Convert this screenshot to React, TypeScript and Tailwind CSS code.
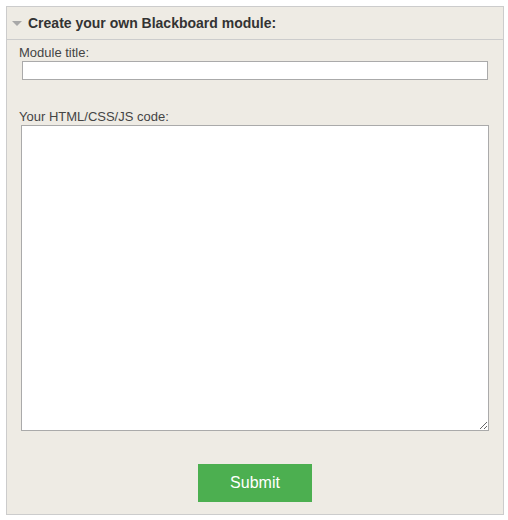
export default function App() {
  return (
    <div className="w-[508px] h-[520px] bg-white p-[6px] font-['Liberation_Sans',Arial,sans-serif]">
      <div className="w-[498px] h-[509px] border border-[#cccccc] bg-[#eeebe4] flex flex-col">
        {/* Header */}
        <div className="h-[33px] border-b border-[#cccccc] flex items-center pl-[5px] gap-[6px]">
          <svg width="10" height="6" viewBox="0 0 10 6" className="mt-[1px]">
            <polygon points="0,0 10,0 5,5" fill="#a8a8a8" />
          </svg>
          <span className="text-[14px] font-bold text-[#333333]">Create your own Blackboard module:</span>
        </div>

        {/* Body */}
        <div className="flex flex-col pl-[12px] pr-[14px] pt-[5px]">
          <label className="text-[13px] leading-[16px] text-[#444444]">Module title:</label>
          <input
            type="text"
            className="ml-[3px] w-[466px] h-[19px] bg-white border border-[#aaaaaa] outline-none"
          />
          <label className="mt-[29px] text-[13px] leading-[16px] text-[#444444]">Your HTML/CSS/JS code:</label>
          <textarea className="ml-[2px] w-[468px] h-[306px] bg-white border border-[#aaaaaa] outline-none resize" />
          <div className="flex justify-center mt-[33px] pl-[2px]">
            <button className="w-[114px] h-[38px] bg-[#4caf50] text-white text-[16px]">Submit</button>
          </div>
        </div>
      </div>
    </div>
  )
}
